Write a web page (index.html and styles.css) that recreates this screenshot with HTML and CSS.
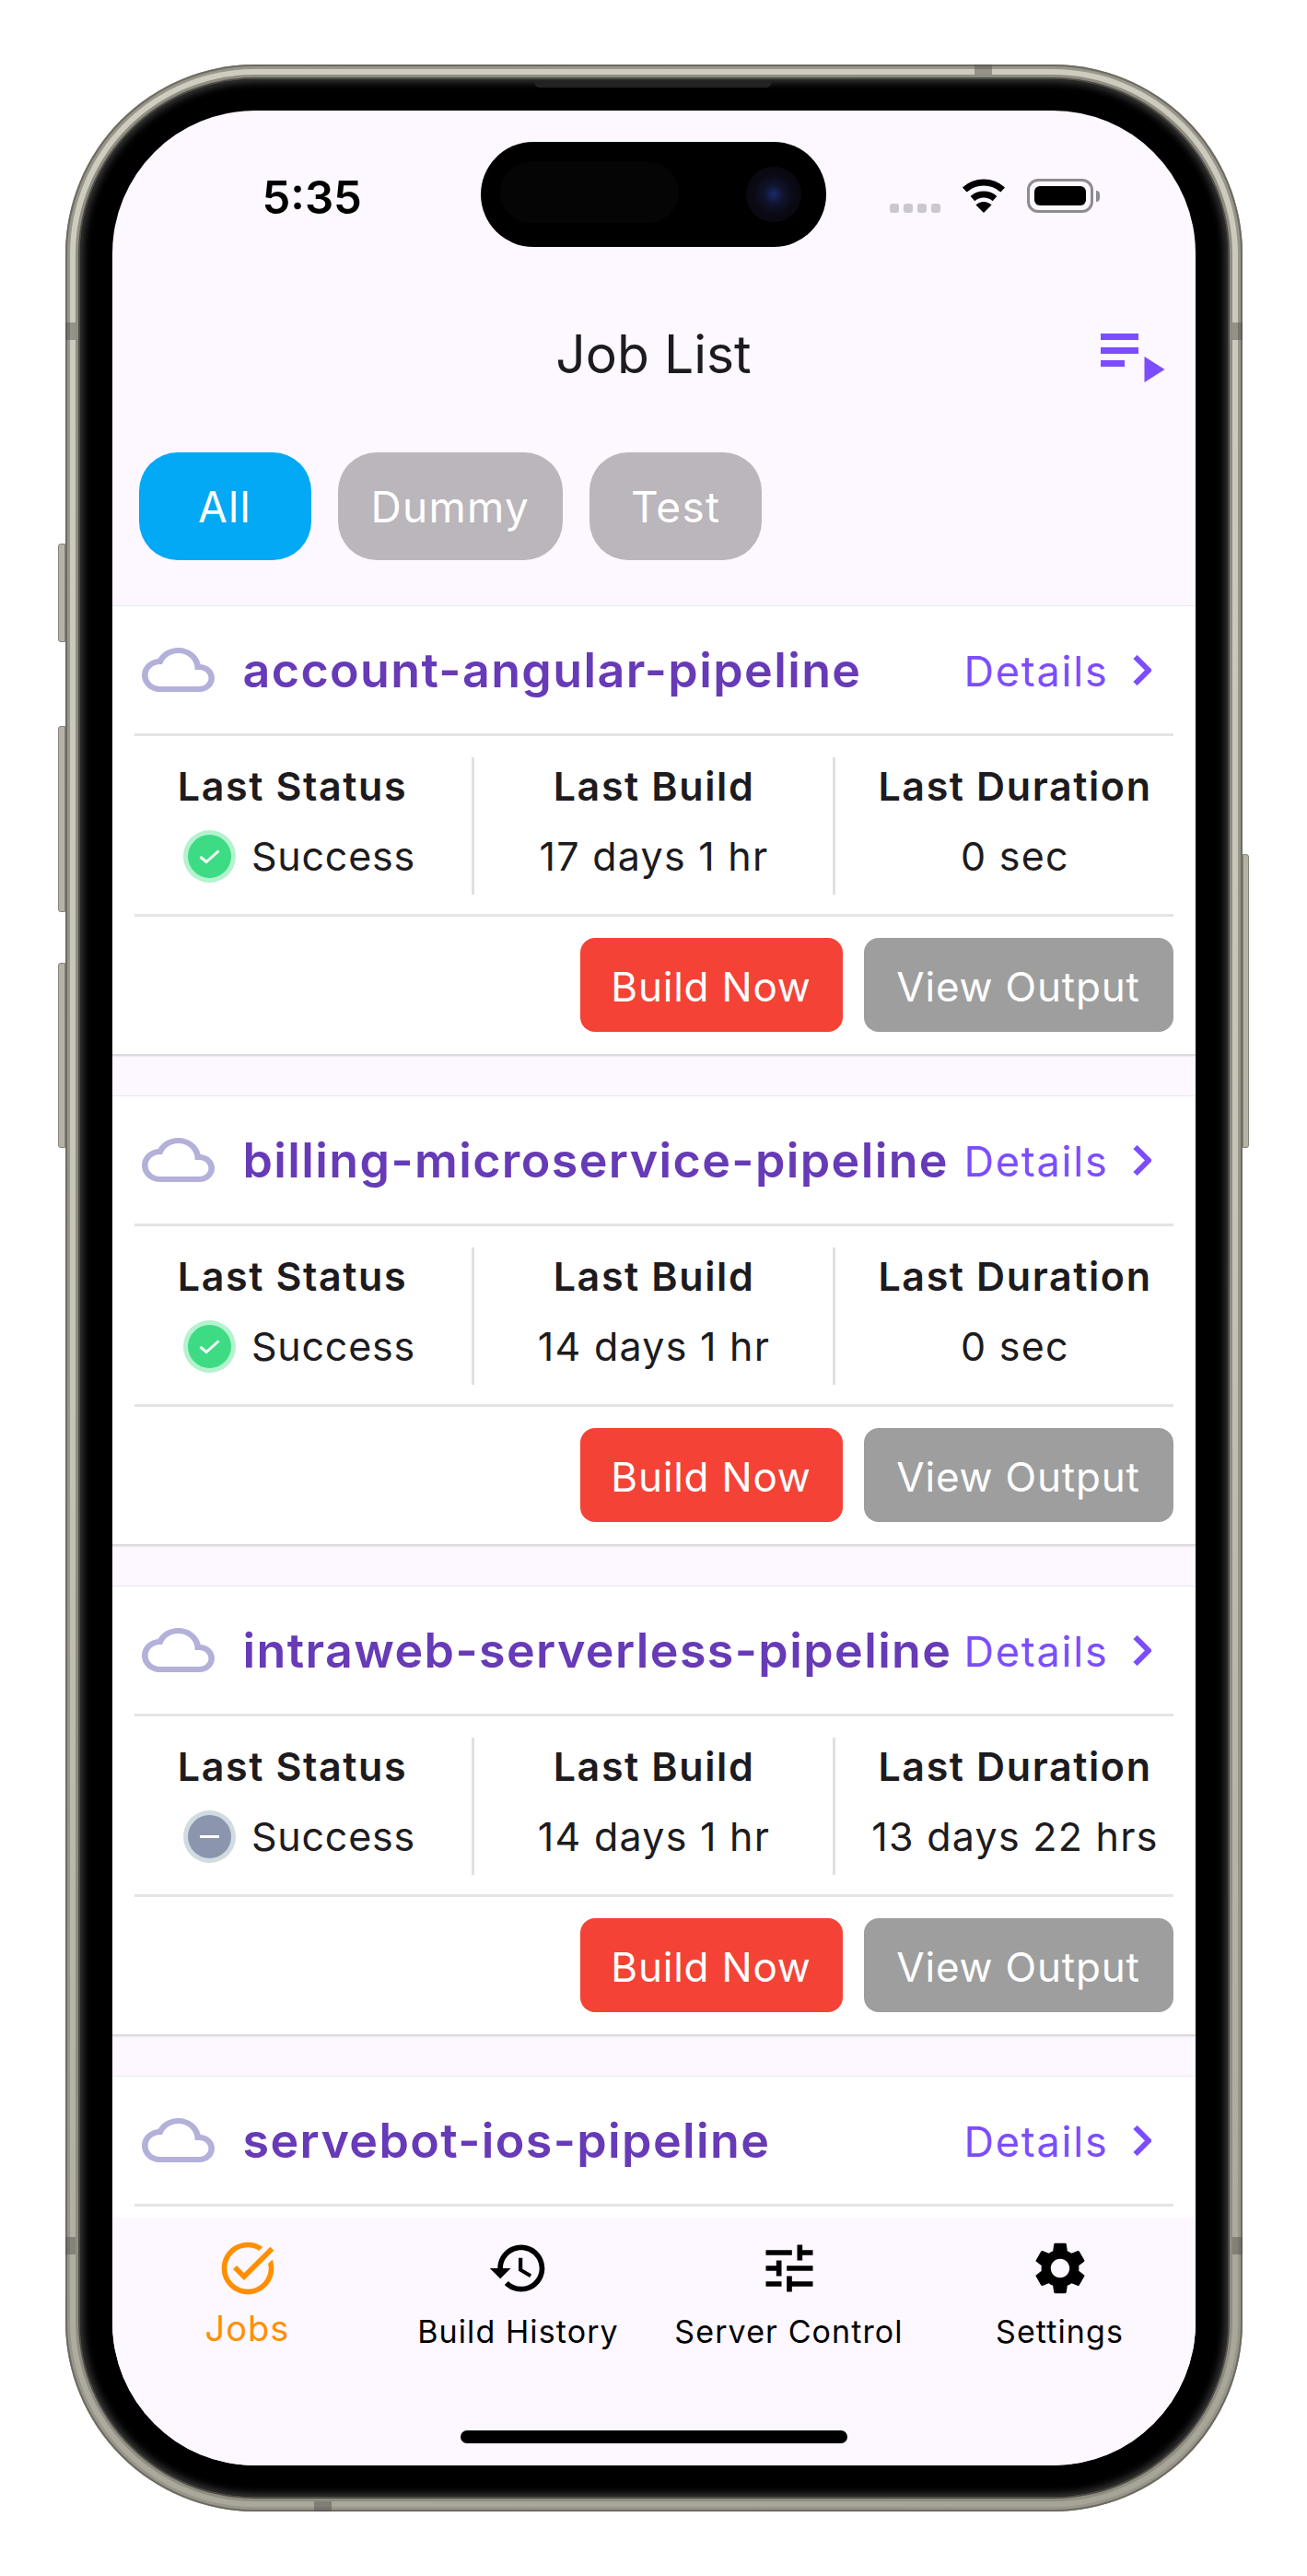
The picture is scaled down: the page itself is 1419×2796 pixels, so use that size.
FILE: index.html
```html
<!DOCTYPE html>
<html lang="en">
<head>
    <meta charset="UTF-8">
    <meta name="viewport" content="width=device-width, initial-scale=1.0">
    <title>Job List</title>
    <link rel="stylesheet" href="styles.css">
</head>
<body>
    <div class="phone">
        <!-- hardware bits around the frame -->
        <span class="side-btn btn-action"></span>
        <span class="side-btn btn-vol-up"></span>
        <span class="side-btn btn-vol-down"></span>
        <span class="side-btn btn-power"></span>
        <span class="band band-top"></span>
        <span class="band band-bottom"></span>
        <span class="band band-left-a"></span>
        <span class="band band-left-b"></span>
        <span class="band band-right-a"></span>
        <span class="band band-right-b"></span>

        <div class="bezel">
            <span class="speaker"></span>
            <div class="screen">
                <div class="island"><span class="sensor"></span><span class="camera"></span></div>

                <div class="status-bar">
                    <span class="time">5:35</span>
                    <div class="status-icons">
                        <div class="signal"><i></i><i></i><i></i><i></i></div>
                        <svg class="wifi" width="50" height="37" viewBox="0 0 50 37">
                            <path d="M4.3 12A31 31 0 0 1 45.7 12" fill="none" stroke="#000" stroke-width="7"/>
                            <path d="M13 21.6A18 18 0 0 1 37 21.6" fill="none" stroke="#000" stroke-width="7"/>
                            <path d="M25 37L16.5 28.5A12 12 0 0 1 33.5 28.5Z" fill="#000"/>
                        </svg>
                        <div class="battery"><span class="battery-fill"></span></div>
                        <span class="battery-nub"></span>
                    </div>
                </div>

                <div class="app-bar">
                    <h1 class="title">Job List</h1>
                    <svg class="queue-icon" width="70" height="53" viewBox="0 0 70 53">
                        <rect x="0" y="0" width="41" height="7" fill="#7c4dff"/>
                        <rect x="0" y="15" width="41" height="7" fill="#7c4dff"/>
                        <rect x="0" y="29" width="26" height="7" fill="#7c4dff"/>
                        <path d="M47.500 25L69.500 39L47.500 53Z" fill="#7c4dff"/>
                    </svg>
                </div>

                <div class="chips">
                    <button class="chip chip-active">All</button>
                    <button class="chip">Dummy</button>
                    <button class="chip">Test</button>
                </div>

                <div class="job-list">
                    <div class="card">
                        <div class="card-head">
                            <svg class="cloud" width="79" height="48" viewBox="0 4 24 16" preserveAspectRatio="none"><path d="M19.35 10.04C18.67 6.59 15.64 4 12 4 9.11 4 6.6 5.64 5.35 8.04 2.34 8.36 0 10.91 0 14c0 3.31 2.69 6 6 6h13c2.76 0 5-2.240 5-5 0-2.640-2.050-4.780-4.650-4.960zM19 18H6c-2.210 0-4-1.790-4-4s1.790-4 4-4h.71C7.370 7.690 9.480 6 12 6c3.040 0 5.500 2.460 5.500 5.500v.5H19c1.660 0 3 1.340 3 3s-1.340 3-3 3z"/></svg>
                            <span class="job-name">account-angular-pipeline</span>
                            <a class="details">Details</a>
                            <svg class="chevron" width="20" height="33" viewBox="0 0 20 33"><path d="M2.500 2L17 16.500L2.500 31" fill="none" stroke="#7c4dff" stroke-width="6"/></svg>
                        </div>
                        <div class="divider"></div>
                        <div class="stats">
                            <div class="stat">
                                <div class="stat-label">Last Status</div>
                                <div class="stat-value status">
                                    <span class="dot dot-ok"><svg width="23" height="17" viewBox="0 0 23 17"><path d="M1.500 9L8 14.500L21.500 2.500" fill="none" stroke="#fff" stroke-width="3"/></svg></span>
                                    Success
                                </div>
                            </div>
                            <div class="stat">
                                <div class="stat-label">Last Build</div>
                                <div class="stat-value">17 days 1 hr</div>
                            </div>
                            <div class="stat">
                                <div class="stat-label">Last Duration</div>
                                <div class="stat-value">0 sec</div>
                            </div>
                        </div>
                        <div class="divider"></div>
                        <div class="actions">
                            <button class="action build">Build Now</button>
                            <button class="action output">View Output</button>
                        </div>
                    </div>

                    <div class="card">
                        <div class="card-head">
                            <svg class="cloud" width="79" height="48" viewBox="0 4 24 16" preserveAspectRatio="none"><path d="M19.35 10.04C18.67 6.59 15.64 4 12 4 9.11 4 6.6 5.64 5.35 8.04 2.34 8.36 0 10.91 0 14c0 3.31 2.69 6 6 6h13c2.76 0 5-2.240 5-5 0-2.640-2.050-4.780-4.650-4.960zM19 18H6c-2.210 0-4-1.790-4-4s1.790-4 4-4h.71C7.370 7.690 9.480 6 12 6c3.040 0 5.500 2.460 5.500 5.500v.5H19c1.660 0 3 1.340 3 3s-1.340 3-3 3z"/></svg>
                            <span class="job-name">billing-microservice-pipeline</span>
                            <a class="details">Details</a>
                            <svg class="chevron" width="20" height="33" viewBox="0 0 20 33"><path d="M2.500 2L17 16.500L2.500 31" fill="none" stroke="#7c4dff" stroke-width="6"/></svg>
                        </div>
                        <div class="divider"></div>
                        <div class="stats">
                            <div class="stat">
                                <div class="stat-label">Last Status</div>
                                <div class="stat-value status">
                                    <span class="dot dot-ok"><svg width="23" height="17" viewBox="0 0 23 17"><path d="M1.500 9L8 14.500L21.500 2.500" fill="none" stroke="#fff" stroke-width="3"/></svg></span>
                                    Success
                                </div>
                            </div>
                            <div class="stat">
                                <div class="stat-label">Last Build</div>
                                <div class="stat-value">14 days 1 hr</div>
                            </div>
                            <div class="stat">
                                <div class="stat-label">Last Duration</div>
                                <div class="stat-value">0 sec</div>
                            </div>
                        </div>
                        <div class="divider"></div>
                        <div class="actions">
                            <button class="action build">Build Now</button>
                            <button class="action output">View Output</button>
                        </div>
                    </div>

                    <div class="card">
                        <div class="card-head">
                            <svg class="cloud" width="79" height="48" viewBox="0 4 24 16" preserveAspectRatio="none"><path d="M19.35 10.04C18.67 6.59 15.64 4 12 4 9.11 4 6.6 5.64 5.35 8.04 2.34 8.36 0 10.91 0 14c0 3.31 2.69 6 6 6h13c2.76 0 5-2.240 5-5 0-2.640-2.050-4.780-4.650-4.960zM19 18H6c-2.210 0-4-1.790-4-4s1.790-4 4-4h.71C7.370 7.690 9.480 6 12 6c3.040 0 5.500 2.460 5.500 5.500v.5H19c1.660 0 3 1.340 3 3s-1.340 3-3 3z"/></svg>
                            <span class="job-name">intraweb-serverless-pipeline</span>
                            <a class="details">Details</a>
                            <svg class="chevron" width="20" height="33" viewBox="0 0 20 33"><path d="M2.500 2L17 16.500L2.500 31" fill="none" stroke="#7c4dff" stroke-width="6"/></svg>
                        </div>
                        <div class="divider"></div>
                        <div class="stats">
                            <div class="stat">
                                <div class="stat-label">Last Status</div>
                                <div class="stat-value status">
                                    <span class="dot dot-idle"><span class="minus"></span></span>
                                    Success
                                </div>
                            </div>
                            <div class="stat">
                                <div class="stat-label">Last Build</div>
                                <div class="stat-value">14 days 1 hr</div>
                            </div>
                            <div class="stat">
                                <div class="stat-label">Last Duration</div>
                                <div class="stat-value">13 days 22 hrs</div>
                            </div>
                        </div>
                        <div class="divider"></div>
                        <div class="actions">
                            <button class="action build">Build Now</button>
                            <button class="action output">View Output</button>
                        </div>
                    </div>

                    <div class="card card-last">
                        <div class="card-head">
                            <svg class="cloud" width="79" height="48" viewBox="0 4 24 16" preserveAspectRatio="none"><path d="M19.35 10.04C18.67 6.59 15.64 4 12 4 9.11 4 6.6 5.64 5.35 8.04 2.34 8.36 0 10.91 0 14c0 3.31 2.69 6 6 6h13c2.76 0 5-2.240 5-5 0-2.640-2.050-4.780-4.650-4.960zM19 18H6c-2.210 0-4-1.790-4-4s1.790-4 4-4h.71C7.370 7.690 9.480 6 12 6c3.040 0 5.500 2.460 5.500 5.500v.5H19c1.660 0 3 1.340 3 3s-1.340 3-3 3z"/></svg>
                            <span class="job-name">servebot-ios-pipeline</span>
                            <a class="details">Details</a>
                            <svg class="chevron" width="20" height="33" viewBox="0 0 20 33"><path d="M2.500 2L17 16.500L2.500 31" fill="none" stroke="#7c4dff" stroke-width="6"/></svg>
                        </div>
                        <div class="divider"></div>
                    </div>
                </div>

                <div class="bottom-nav">
                    <div class="tabs">
                        <div class="tab tab-active">
                            <svg width="68" height="68" viewBox="0 0 24 24" fill="#ff8f00"><path d="M22 5.180 10.590 16.600l-4.240-4.240 1.410-1.410 2.830 2.830 10-10L22 5.180zm-2.210 5.040c.13.57.21 1.170.21 1.780 0 4.420-3.580 8-8 8s-8-3.580-8-8 3.580-8 8-8c1.580 0 3.040.46 4.280 1.250l1.440-1.440C16.100 2.670 14.130 2 12 2 6.480 2 2 6.480 2 12s4.480 10 10 10 10-4.480 10-10c0-1.190-.22-2.330-.6-3.390l-1.610 1.610z"/></svg>
                            <span class="tab-label">Jobs</span>
                        </div>
                        <div class="tab">
                            <svg width="68" height="68" viewBox="0 0 24 24"><path d="M13 3c-4.970 0-9 4.030-9 9H1l3.890 3.890.07.14L9 12H6c0-3.870 3.130-7 7-7s7 3.130 7 7-3.130 7-7 7c-1.930 0-3.680-.79-4.940-2.060l-1.420 1.420C8.270 19.990 10.510 21 13 21c4.970 0 9-4.030 9-9s-4.030-9-9-9zm-1 5v5l4.280 2.540.72-1.210-3.500-2.080V8H12z"/></svg>
                            <span class="tab-label">Build History</span>
                        </div>
                        <div class="tab">
                            <svg width="68" height="68" viewBox="0 0 24 24"><path d="M3 17v2h6v-2H3zM3 5v2h10V5H3zm10 16v-2h8v-2h-8v-2h-2v6h2zM7 9v2H3v2h4v2h2V9H7zm14 4v-2H11v2h10zm-6-4h2V7h4V5h-4V3h-2v6z"/></svg>
                            <span class="tab-label">Server Control</span>
                        </div>
                        <div class="tab">
                            <svg width="68" height="68" viewBox="0 0 24 24"><path d="M19.140 12.940c.04-.3.06-.61.06-.94 0-.32-.02-.64-.07-.94l2.030-1.580c.18-.14.23-.41.12-.61l-1.920-3.320c-.12-.22-.37-.29-.59-.22l-2.390.96c-.5-.38-1.030-.7-1.620-.94l-.36-2.540c-.04-.24-.24-.41-.48-.41h-3.840c-.24 0-.43.17-.47.41l-.36 2.540c-.59.24-1.130.57-1.620.94l-2.390-.96c-.22-.08-.47 0-.59.22L2.740 8.870c-.12.21-.08.47.12.61l2.030 1.580c-.05.3-.09.63-.09.94s.02.64.07.94l-2.030 1.580c-.18.14-.23.41-.12.61l1.920 3.320c.12.22.37.29.59.22l2.390-.96c.5.38 1.030.7 1.620.94l.36 2.54c.05.24.24.41.48.41h3.840c.24 0 .44-.17.47-.41l.36-2.540c.59-.24 1.130-.56 1.620-.94l2.390.96c.22.08.47 0 .59-.22l1.920-3.320c.12-.22.07-.47-.12-.61l-2.010-1.580zM12 15.600c-1.980 0-3.600-1.620-3.600-3.600s1.620-3.600 3.600-3.600 3.600 1.620 3.600 3.600-1.620 3.600-3.600 3.600z"/></svg>
                            <span class="tab-label">Settings</span>
                        </div>
                    </div>
                    <div class="home-indicator"></div>
                </div>
            </div>
        </div>
    </div>
</body>
</html>
```

FILE: styles.css
```css
* {
    box-sizing: border-box;
}

body {
    margin: 0;
    background-color: #fff;
    font-family: Inter, "Liberation Sans", sans-serif;
    color: #1d1b20;
}

/* Phone frame */
.phone {
    position: relative;
    width: 1278px;
    height: 2656px;
    margin: 70px auto;
    padding: 16px;
    border-radius: 206px;
    background: linear-gradient(170deg, #cfccc0 0%, #c6c3b7 50%, #a5a296 100%);
    box-shadow: inset 0 0 0 2px #6e6c62, inset 0 0 0 5px #98958a;
}

.bezel {
    position: relative;
    height: 100%;
    padding: 34px 35px;
    border-radius: 190px;
    background-color: #000;
    box-shadow: 0 0 0 2px #4d4c45, 0 0 0 5px #8f8c81, inset 0 0 9px 3px #3c3c3c;
}

.speaker {
    position: absolute;
    top: 2px;
    left: 493px;
    width: 258px;
    height: 7px;
    border-radius: 0 0 6px 6px;
    background-color: #222;
}

.side-btn {
    position: absolute;
    width: 8px;
    background-color: #b5b2a7;
    border: 1px solid #85837a;
}

.btn-action { left: -8px; top: 520px; height: 107px; border-radius: 3px 0 0 3px; }
.btn-vol-up { left: -8px; top: 718px; height: 202px; border-radius: 3px 0 0 3px; }
.btn-vol-down { left: -8px; top: 975px; height: 201px; border-radius: 3px 0 0 3px; }
.btn-power { right: -7px; top: 857px; width: 7px; height: 319px; border-radius: 0 3px 3px 0; }

.band {
    position: absolute;
    background-color: rgba(80, 78, 74, 0.45);
}

.band-top { top: 0; left: 987px; width: 19px; height: 16px; }
.band-bottom { bottom: 0; left: 270px; width: 19px; height: 16px; }
.band-left-a { left: 0; top: 280px; width: 16px; height: 19px; }
.band-left-b { left: 0; top: 2358px; width: 16px; height: 19px; }
.band-right-a { right: 0; top: 280px; width: 16px; height: 19px; }
.band-right-b { right: 0; top: 2358px; width: 16px; height: 19px; }

.screen {
    position: relative;
    display: flex;
    flex-direction: column;
    height: 100%;
    border-radius: 155px;
    overflow: hidden;
    background-color: #fdf7ff;
}

.island {
    position: absolute;
    top: 34px;
    left: 400px;
    width: 375px;
    height: 114px;
    border-radius: 57px;
    background-color: #000;
}

.sensor {
    position: absolute;
    top: 22px;
    left: 21px;
    width: 194px;
    height: 66px;
    border-radius: 33px;
    background-color: #050505;
}

.camera {
    position: absolute;
    top: 27px;
    left: 288px;
    width: 60px;
    height: 60px;
    border-radius: 50%;
    background: radial-gradient(circle, #1a2a6a 0%, #10142e 24%, #0b0a14 50%, #08070d 100%);
}

/* Status bar */
.status-bar {
    display: flex;
    justify-content: space-between;
    height: 170px;
    padding: 76px 104px 0 163px;
}

.time {
    font-size: 49px;
    font-weight: 600;
    line-height: 37px;
    color: #000;
}

.status-icons {
    display: flex;
    align-items: flex-end;
    height: 37px;
    margin-top: -2px;
}

.signal {
    display: flex;
    gap: 5px;
    margin-right: 22px;
}

.signal i {
    width: 10px;
    height: 10px;
    border-radius: 3px;
    background-color: #cbc7cf;
}

.wifi {
    margin-right: 22px;
}

.battery {
    width: 72px;
    height: 37px;
    padding: 5px;
    border: 3px solid #8e8c92;
    border-radius: 12px;
}

.battery-fill {
    display: block;
    height: 100%;
    border-radius: 6px;
    background-color: #000;
}

.battery-nub {
    width: 4px;
    height: 12px;
    margin: 0 0 12px 3px;
    border-radius: 0 4px 4px 0;
    background-color: #8e8c92;
}

/* App bar */
.app-bar {
    position: relative;
    display: flex;
    justify-content: center;
    align-items: center;
    height: 186px;
    padding-top: 3px;
}

.title {
    margin: 0;
    font-size: 57px;
    font-weight: 400;
}

.queue-icon {
    position: absolute;
    top: 72px;
    right: 33px;
}

/* Filter chips */
.chips {
    display: flex;
    gap: 29px;
    padding: 15px 29px 49px;
}

.chip {
    min-width: 187px;
    height: 117px;
    padding: 0 36px;
    border: none;
    border-radius: 42px;
    background-color: #bab6bb;
    color: #fff;
    font-family: inherit;
    font-size: 46px;
    letter-spacing: 1.3px;
}

.chip-active {
    background-color: #03a9f4;
}

/* Job cards */
.job-list {
    display: flex;
    flex-direction: column;
    flex: 1;
    gap: 43px;
    min-height: 0;
}

.card {
    height: 489px;
    flex-shrink: 0;
    background-color: #fff;
    border-top: 1px solid #ece9ef;
    border-bottom: 2px solid #dcdadf;
    box-shadow: 0 1px 2px rgba(0, 0, 0, 0.08);
}

.card-last {
    height: auto;
    flex: 1;
    border-bottom: none;
    box-shadow: none;
}

.card-head {
    display: flex;
    align-items: center;
    height: 138px;
    padding: 0 48px 0 32px;
}

.cloud {
    flex-shrink: 0;
    margin-right: 31px;
    fill: #b3b0d9;
}

.job-name {
    font-size: 52px;
    font-weight: 600;
    letter-spacing: 1.38px;
    white-space: nowrap;
    color: #673ab7;
}

.details {
    margin-left: auto;
    padding-top: 2px;
    font-size: 45px;
    letter-spacing: 1.8px;
    color: #7c4dff;
}

.chevron {
    flex-shrink: 0;
    margin-left: 26px;
}

.divider {
    height: 3px;
    margin: 0 24px;
    background-color: #e4e4e4;
}

.stats {
    display: grid;
    grid-template-columns: repeat(3, 1fr);
    padding: 23px 0 21px;
}

.stat {
    display: flex;
    flex-direction: column;
    align-items: center;
    height: 149px;
}

.stat + .stat {
    margin-left: -2px;
    border-left: 3px solid #e0e0e0;
}

.stat-label {
    font-size: 43px;
    font-weight: 600;
    line-height: 62px;
    letter-spacing: 1.6px;
}

.stat-value {
    padding-top: 2px;
    font-size: 43px;
    line-height: 87px;
    letter-spacing: 1.25px;
}

.status {
    display: flex;
    align-items: center;
    gap: 17px;
    margin-left: 15px;
    letter-spacing: 0.8px;
}

.dot {
    display: flex;
    justify-content: center;
    align-items: center;
    width: 47px;
    height: 47px;
    margin: 5px;
    border-radius: 50%;
}

.dot-ok {
    background-color: #3ddc84;
    box-shadow: 0 0 0 5px #b6f2cf;
}

.dot-idle {
    background-color: #8b96ae;
    box-shadow: 0 0 0 5px #d0dce0;
}

.minus {
    width: 21px;
    height: 3px;
    background-color: #fff;
}

.actions {
    display: flex;
    justify-content: flex-end;
    gap: 23px;
    padding: 23px 24px 0;
}

.action {
    height: 102px;
    padding: 4px 0 0;
    border: none;
    border-radius: 16px;
    color: #fff;
    font-family: inherit;
    font-size: 44px;
    letter-spacing: 0.8px;
}

.build {
    width: 285px;
    background-color: #f44336;
}

.output {
    width: 336px;
    background-color: #9e9e9e;
}

/* Bottom navigation */
.bottom-nav {
    display: flex;
    flex-direction: column;
    height: 269px;
    flex-shrink: 0;
    background-color: #fdf7ff;
}

.tabs {
    display: grid;
    grid-template-columns: repeat(4, 1fr);
    padding-top: 21px;
}

.tab {
    display: flex;
    flex-direction: column;
    align-items: center;
}

.tab-label {
    margin-top: 13px;
    font-size: 34px;
    line-height: 44px;
    letter-spacing: 1.1px;
    color: #000;
}

.tab-active .tab-label {
    margin-top: 9px;
    font-size: 38px;
    letter-spacing: 1px;
    color: #ff8f00;
}

.home-indicator {
    width: 420px;
    height: 14px;
    margin: auto auto 24px;
    border-radius: 7px;
    background-color: #000;
}
```
